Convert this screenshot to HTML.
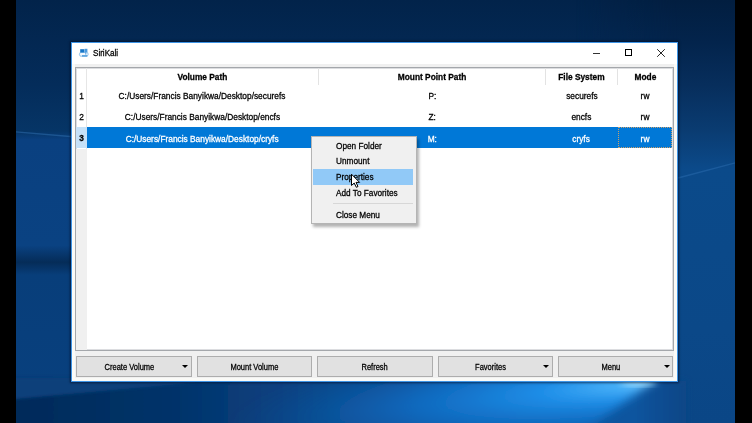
<!DOCTYPE html>
<html><head><meta charset="utf-8">
<style>
*{margin:0;padding:0;box-sizing:border-box}
html,body{width:752px;height:423px;overflow:hidden;background:#000}
body{position:relative;font-family:"Liberation Sans",sans-serif;color:#000}
.a{position:absolute}
#desk{position:absolute;left:16px;top:0;width:719px;height:423px;overflow:hidden;background:#052a5a}
#win{position:absolute;left:71px;top:42px;width:607px;height:340px;background:#f0f0f0;border:1px solid #3d94e6;box-shadow:0 0 2px 1px rgba(0,0,20,.55),inset 0 0 0 3px #fafaf7}
#title{position:absolute;left:72px;top:43px;width:605px;height:21px;background:#fff}
.c{position:absolute;text-align:center;white-space:pre;font-size:9.5px;line-height:10px;-webkit-text-stroke:0.3px currentColor}
.c span{display:inline-block;transform:scaleX(.878);transform-origin:50% 50%}
.b{font-weight:bold}
.l{position:absolute;white-space:pre;font-size:9.5px;line-height:10px;-webkit-text-stroke:0.3px currentColor}
.l span{display:inline-block;transform:scaleX(.867);transform-origin:0 50%}
.btn{position:absolute;top:356px;height:21px;background:#e1e1e1;border:1px solid #adadad}
.bt{position:absolute;top:361.96px;white-space:pre;font-size:9.5px;line-height:9.5px;text-align:center;-webkit-text-stroke:0.3px currentColor}
.bt span{display:inline-block;transform:scaleX(.79);transform-origin:50% 50%}
.arr{position:absolute;top:365px;width:0;height:0;border-left:3px solid transparent;border-right:3px solid transparent;border-top:3.5px solid #000}
</style></head><body>
<div id="desk">
<svg width="719" height="423" style="position:absolute;left:0;top:0">
<defs>
<linearGradient id="g0" x1="0" y1="0" x2="0" y2="1">
<stop offset="0" stop-color="#02234a"/>
<stop offset="0.2" stop-color="#042c5a"/>
<stop offset="0.31" stop-color="#063566"/>
<stop offset="0.33" stop-color="#0a4080"/>
<stop offset="0.58" stop-color="#0a4282"/>
<stop offset="0.62" stop-color="#052c58"/>
<stop offset="0.65" stop-color="#083e7a"/>
<stop offset="0.93" stop-color="#08407e"/>
<stop offset="1" stop-color="#063668"/>
</linearGradient>
<linearGradient id="gr" x1="0" y1="0" x2="0" y2="1">
<stop offset="0" stop-color="#021e40"/>
<stop offset="0.1" stop-color="#03244c"/>
<stop offset="0.2" stop-color="#072e5c"/>
<stop offset="0.31" stop-color="#0a3c72"/>
<stop offset="0.4" stop-color="#0b4a8a"/>
<stop offset="0.78" stop-color="#0b4888"/>
<stop offset="1" stop-color="#0a4686"/>
</linearGradient>
<linearGradient id="gt" x1="0" y1="0" x2="1" y2="0">
<stop offset="0" stop-color="#062650"/>
<stop offset="0.5" stop-color="#05234c"/>
<stop offset="1" stop-color="#041b3c"/>
</linearGradient>
<linearGradient id="gb" x1="0" y1="0" x2="1" y2="0">
<stop offset="0" stop-color="#042a58"/>
<stop offset="0.25" stop-color="#05336a"/>
<stop offset="0.5" stop-color="#0a4a8e"/>
<stop offset="0.92" stop-color="#0c55a0"/>
<stop offset="1" stop-color="#0b4686"/>
</linearGradient>
<linearGradient id="g4" gradientUnits="userSpaceOnUse" x1="200" y1="0" x2="636" y2="0">
<stop offset="0" stop-color="#0c58a8" stop-opacity="0"/>
<stop offset="0.4" stop-color="#0e62b8" stop-opacity="0.8"/>
<stop offset="0.8" stop-color="#1a88e4" stop-opacity="1"/>
<stop offset="1" stop-color="#40acf6" stop-opacity="1"/>
</linearGradient>
<filter id="bl2" x="-20%" y="-50%" width="140%" height="200%"><feGaussianBlur stdDeviation="7"/></filter>
<filter id="bl05" x="-20%" y="-200%" width="140%" height="500%"><feGaussianBlur stdDeviation="0.7"/></filter>
<filter id="bl1" x="-20%" y="-50%" width="140%" height="200%"><feGaussianBlur stdDeviation="1.5"/></filter>
<radialGradient id="g5" cx="0" cy="0" r="1" gradientUnits="userSpaceOnUse" gradientTransform="translate(628 382) rotate(-6) scale(420 64)">
<stop offset="0" stop-color="#9ee0ff"/>
<stop offset="0.06" stop-color="#4cb4fa"/>
<stop offset="0.25" stop-color="#1e8ee8" stop-opacity="1"/>
<stop offset="0.55" stop-color="#1070c8" stop-opacity="0.8"/>
<stop offset="1" stop-color="#0a4a8e" stop-opacity="0"/>
</radialGradient>
<filter id="bl3" x="-20%" y="-50%" width="140%" height="200%"><feGaussianBlur stdDeviation="5"/></filter>
<linearGradient id="fx" gradientUnits="userSpaceOnUse" x1="560" y1="0" x2="662" y2="0">
<stop offset="0" stop-color="#fff" stop-opacity="0"/>
<stop offset="1" stop-color="#fff" stop-opacity="1"/>
</linearGradient>
<mask id="mr" maskUnits="userSpaceOnUse" x="0" y="0" width="719" height="423"><rect x="560" y="0" width="159" height="423" fill="url(#fx)"/></mask>
<filter id="bl" x="-20%" y="-20%" width="140%" height="140%"><feGaussianBlur stdDeviation="3"/></filter>
</defs>
<rect width="719" height="423" fill="url(#g0)"/>
<rect x="560" y="0" width="159" height="423" fill="url(#gr)" mask="url(#mr)"/>
<rect x="-10" y="381" width="680" height="50" fill="url(#gb)" filter="url(#bl)"/>
<path d="M662 178 L730 160" stroke="#3a7cc0" stroke-width="1.4" opacity="0.35" filter="url(#bl05)"/>
<path d="M-5 131.5 L60 137" stroke="#3070b0" stroke-width="1.4" opacity="0.5" filter="url(#bl05)"/>
<path d="M-10 378 L230 378 L-10 400 Z" fill="#0a3f7a" filter="url(#bl1)"/>
<g filter="url(#bl3)"><path d="M645 376 L0 376 L0 440 L556 440 Z" fill="url(#g5)"/></g>
<ellipse cx="622" cy="383" rx="18" ry="3" fill="#a8e2ff" opacity="0.75" filter="url(#bl)"/>
</svg>
</div>

<div id="win"></div>
<div id="title"></div>
<!-- icon -->
<svg class="a" style="left:78px;top:47px" width="12" height="11" viewBox="0 0 12 11">
<path d="M2.2 9.2 Q0.6 7.4 2.2 5.4 L9.6 5.4 Q10.8 7.4 9.4 9.2 Z" stroke="#86bdea" stroke-width="0.9" fill="#f2f8fe"/>
<rect x="2.2" y="2.2" width="4.2" height="3.3" fill="#1576c8"/>
<rect x="6.6" y="1.8" width="2.8" height="3.2" fill="#4a9ade"/>
<rect x="7.3" y="5" width="1" height="2.6" fill="#4a9ade"/>
<rect x="4" y="8.4" width="5.2" height="1" fill="#1a7ed0"/>
</svg>
<div class="l" style="left:92.8px;top:49px;font-size:9px;line-height:9px"><span style="transform:scaleX(.896)">SiriKali</span></div>
<!-- controls -->
<div class="a" style="left:593px;top:53px;width:7px;height:1px;background:#333"></div>
<div class="a" style="left:625px;top:49px;width:7px;height:7px;border:1px solid #000"></div>
<svg class="a" style="left:656px;top:48px" width="10" height="10" viewBox="0 0 10 10"><path d="M1.2 1.2L8.8 8.8M8.8 1.2L1.2 8.8" stroke="#1a1a1a" stroke-width="0.95"/></svg>

<!-- table frame -->
<div class="a" style="left:75px;top:67px;width:599px;height:284px;border:1px solid #a4a7ab;background:#fff;box-shadow:inset 0 0 0 1px #dcdde0"></div>
<!-- row header empty area -->
<div class="a" style="left:76px;top:149px;width:11px;height:201px;background:#f0f0f0"></div>
<!-- row header separator -->
<div class="a" style="left:86px;top:68px;width:1px;height:81px;background:#e6e6e6"></div>
<!-- header separators -->
<div class="a" style="left:318px;top:68px;width:1px;height:17px;background:#e3e3e3"></div>
<div class="a" style="left:545px;top:68px;width:1px;height:17px;background:#e3e3e3"></div>
<div class="a" style="left:617px;top:68px;width:1px;height:17px;background:#e3e3e3"></div>
<!-- selected row -->
<div class="a" style="left:76px;top:127px;width:11px;height:21px;background:#c6e1f8"></div>
<div class="a" style="left:87px;top:127px;width:585px;height:21px;background:#0078d7"></div>
<div class="a" style="left:618px;top:127px;width:54px;height:21px;border:1px dotted #c8a070"></div>

<!-- headers -->
<div class="c b" style="left:87px;top:71.57px;width:231px"><span>Volume Path</span></div>
<div class="c b" style="left:319px;top:71.57px;width:227px"><span>Mount Point Path</span></div>
<div class="c b" style="left:545px;top:71.57px;width:73px"><span>File System</span></div>
<div class="c b" style="left:618px;top:71.57px;width:55px"><span>Mode</span></div>

<!-- rows -->
<div class="c" style="left:76.5px;top:90.57px;width:10px"><span>1</span></div>
<div class="c" style="left:87px;top:90.57px;width:231px"><span>C:/Users/Francis Banyikwa/Desktop/securefs</span></div>
<div class="c" style="left:319px;top:90.57px;width:227px"><span>P:</span></div>
<div class="c" style="left:545px;top:90.57px;width:73px"><span>securefs</span></div>
<div class="c" style="left:618px;top:90.57px;width:55px"><span>rw</span></div>

<div class="c" style="left:76.5px;top:112.07px;width:10px"><span>2</span></div>
<div class="c" style="left:87px;top:112.07px;width:231px"><span>C:/Users/Francis Banyikwa/Desktop/encfs</span></div>
<div class="c" style="left:319px;top:112.07px;width:227px"><span>Z:</span></div>
<div class="c" style="left:545px;top:112.07px;width:73px"><span>encfs</span></div>
<div class="c" style="left:618px;top:112.07px;width:55px"><span>rw</span></div>

<div class="c b" style="left:77px;top:133.07px;width:10px"><span>3</span></div>
<div class="c" style="left:87px;top:133.57px;width:231px;color:#fff"><span>C:/Users/Francis Banyikwa/Desktop/cryfs</span></div>
<div class="c" style="left:319px;top:133.57px;width:227px;color:#fff"><span>M:</span></div>
<div class="c" style="left:545px;top:133.57px;width:73px;color:#fff"><span>cryfs</span></div>
<div class="c" style="left:618px;top:133.57px;width:55px;color:#fff"><span>rw</span></div>

<!-- context menu -->
<div class="a" style="left:313px;top:139px;width:106px;height:88px;background:rgba(0,0,0,.3);filter:blur(1.5px)"></div>
<div class="a" style="left:311px;top:136px;width:106px;height:88px;background:#f0f0f0;border:1px solid #b4b4b4"></div>
<div class="a" style="left:313px;top:169px;width:100px;height:16px;background:#91c9f7"></div>
<div class="a" style="left:333px;top:203px;width:80px;height:1px;background:#d7d7d7"></div>
<div class="l" style="left:336px;top:140.97px"><span>Open Folder</span></div>
<div class="l" style="left:336px;top:156.07px"><span>Unmount</span></div>
<div class="l" style="left:336px;top:172.27px"><span>Properties</span></div>
<div class="l" style="left:336px;top:187.57px"><span>Add To Favorites</span></div>
<div class="l" style="left:336px;top:209.87px"><span>Close Menu</span></div>
<!-- cursor -->
<svg class="a" style="left:350px;top:173px" width="12" height="16" viewBox="0 0 12 16">
<path d="M1.5 1.2 L1.5 12.5 L4.2 10 L6.3 14.3 L8 13.5 L6 9.4 L9.6 9.4 Z" fill="#fff" stroke="#000" stroke-width="1" stroke-linejoin="round"/>
</svg>

<!-- buttons -->
<div class="btn" style="left:76px;width:116px"></div>
<div class="btn" style="left:197px;width:115px"></div>
<div class="btn" style="left:317px;width:116px"></div>
<div class="btn" style="left:438px;width:115px"></div>
<div class="btn" style="left:558px;width:115px"></div>
<div class="bt" style="left:79.3px;width:100px"><span>Create Volume</span></div>
<div class="bt" style="left:203.9px;width:100px"><span>Mount Volume</span></div>
<div class="bt" style="left:324.2px;width:100px"><span>Refresh</span></div>
<div class="bt" style="left:440.5px;width:100px"><span>Favorites</span></div>
<div class="bt" style="left:560.9px;width:100px"><span>Menu</span></div>
<div class="arr" style="left:182px"></div>
<div class="arr" style="left:542.5px"></div>
<div class="arr" style="left:663.5px"></div>
</body></html>
